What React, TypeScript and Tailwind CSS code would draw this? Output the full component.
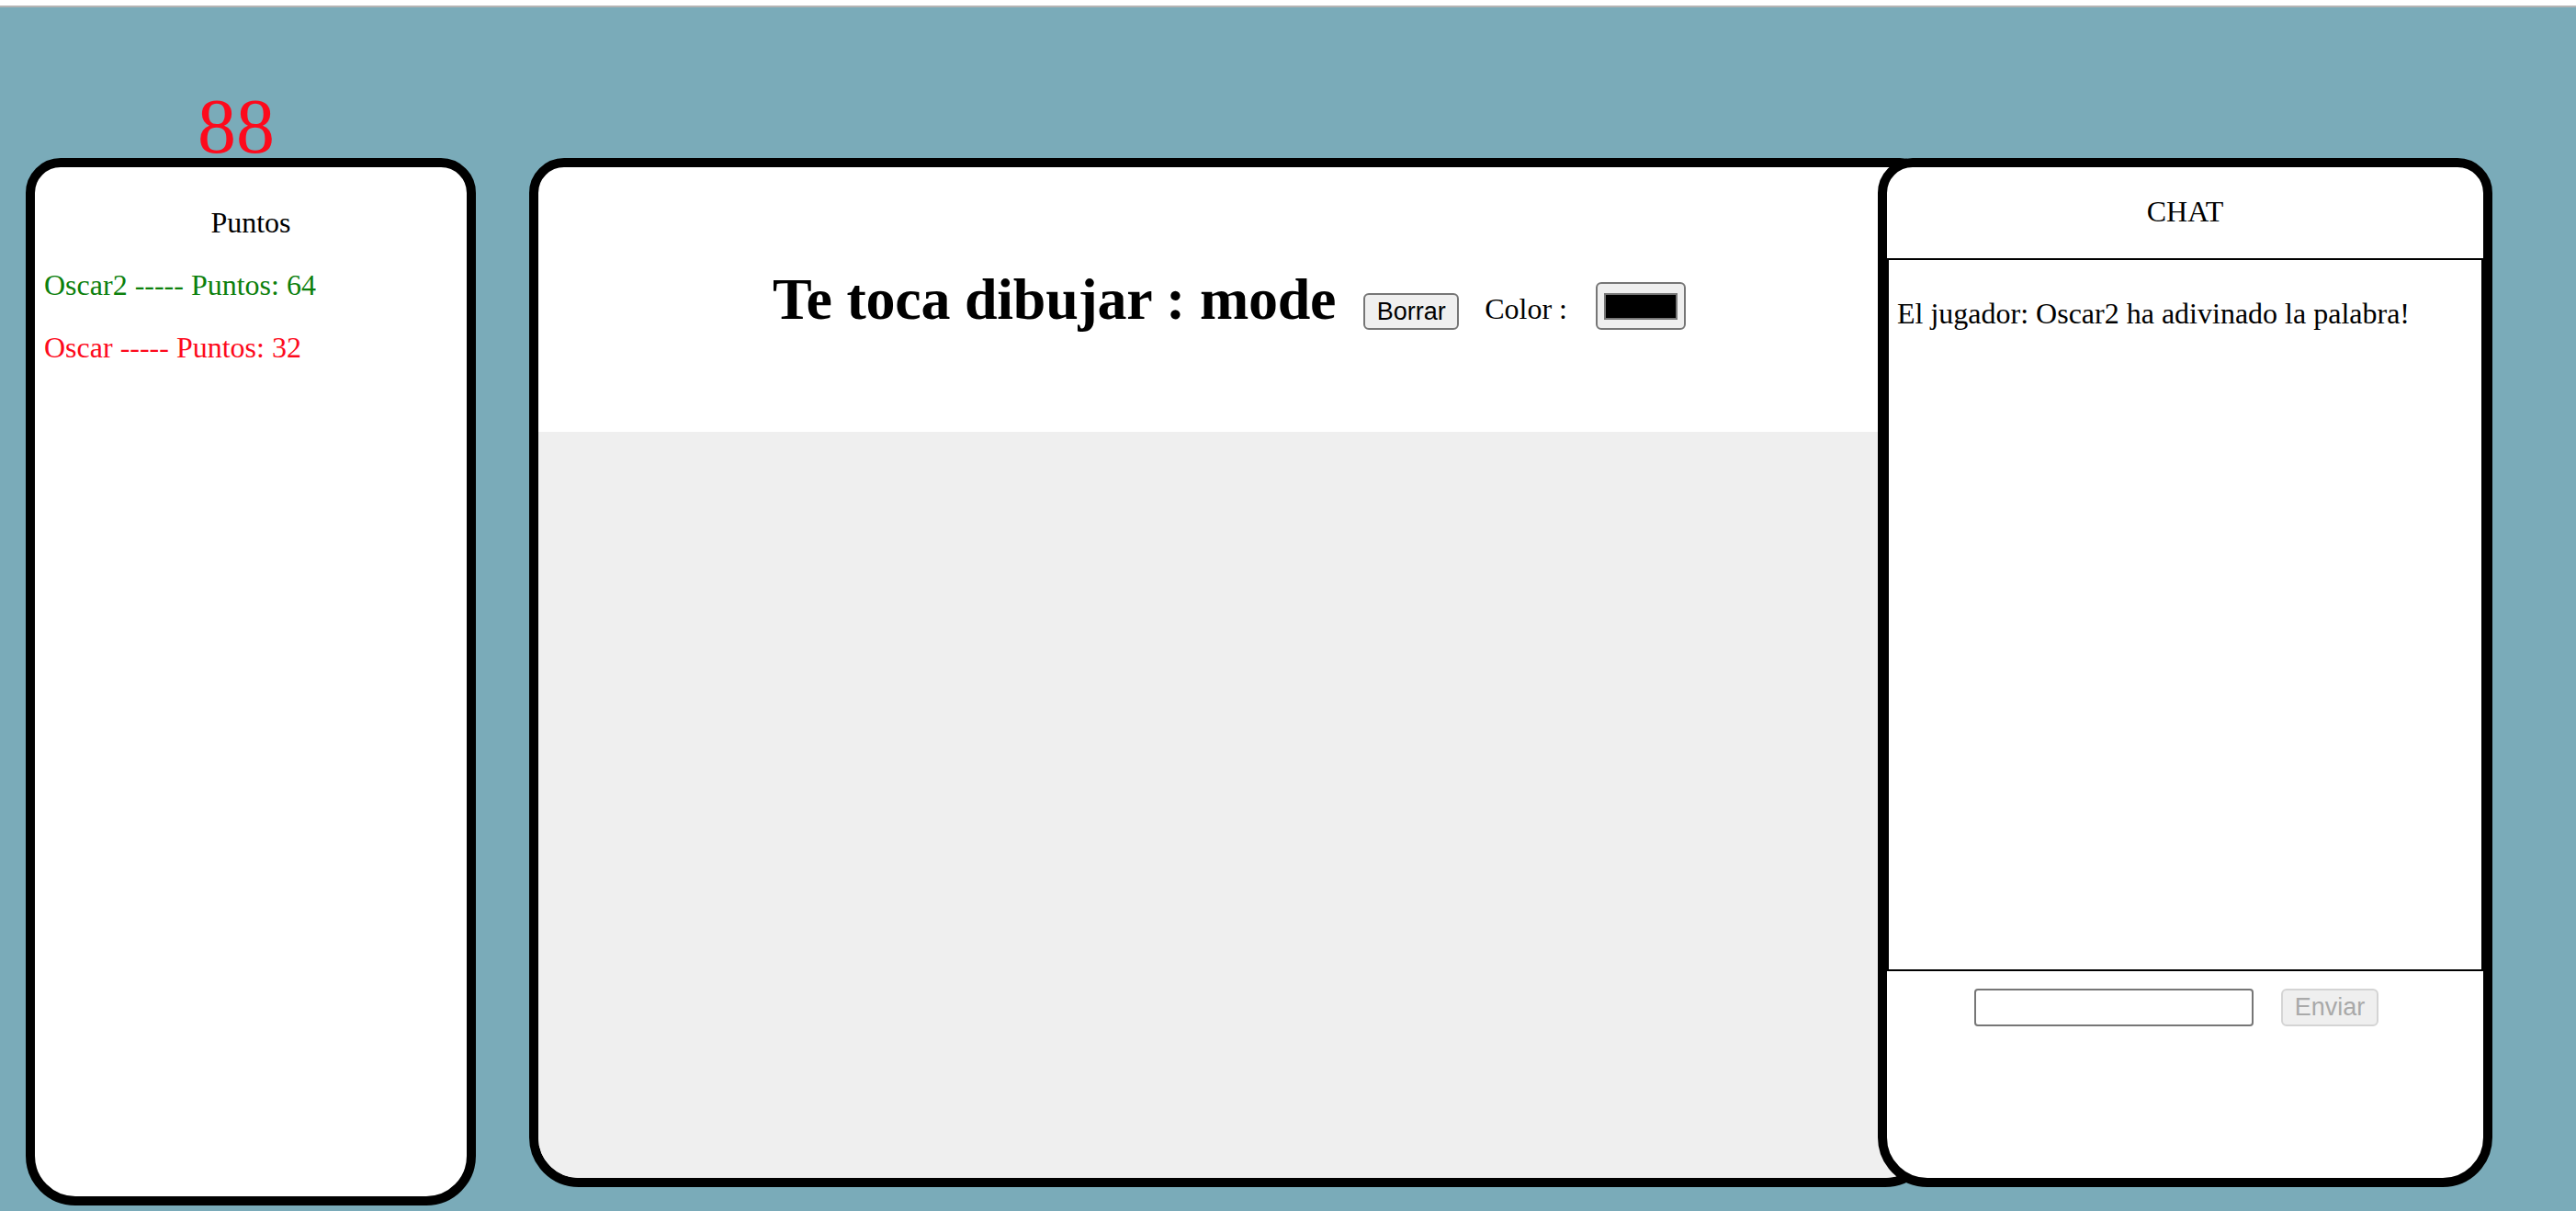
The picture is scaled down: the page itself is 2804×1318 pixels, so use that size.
import React from "react";

const players = [
  { name: "Oscar2", points: 64, color: "text-[#0c800c]" },
  { name: "Oscar", points: 32, color: "text-[#fd0a1c]" },
];

export default function App() {
  return (
    <div className="min-h-screen bg-[#7aabb9] font-['Liberation_Serif','Times_New_Roman',serif] text-black">
      <div className="h-[6px] bg-white" />
      <div className="h-[2px] bg-[#b4b4b4]" />

      <main className="flex items-start pl-[28px] pt-[95px]">
        {/* puntos */}
        <section className="w-[490px] shrink-0">
          <div className="h-[69px] pl-[187px] text-[84px] leading-[69px] text-[#fd0a1c]">88</div>
          <div className="h-[1140px] rounded-t-[38px] rounded-b-[54px] border-[10px] border-black bg-white p-[10px] text-[32px] leading-[36px]">
            <p className="my-[32px] text-center">Puntos</p>
            {players.map((p) => (
              <p key={p.name} className={`my-[32px] ${p.color}`}>
                {p.name} ----- Puntos: {p.points}
              </p>
            ))}
          </div>
        </section>

        {/* pizarra */}
        <section className="ml-[58px] mt-[69px] flex h-[1120px] w-[1530px] shrink-0 flex-col overflow-hidden rounded-t-[38px] rounded-b-[54px] border-[10px] border-black bg-white">
          <div className="flex h-[288px] shrink-0 items-start justify-center pr-[6px]">
            <h1 className="mt-[107px] text-[64px] font-bold leading-[74px] tracking-[-0.25px]">Te toca dibujar : mode</h1>
            <button className="ml-[30px] mt-[137px] h-[40px] w-[104px] rounded-[6px] border-2 border-[#767676] bg-[#efefef] font-['Liberation_Sans',Arial,sans-serif] text-[27px] leading-none">
              Borrar
            </button>
            <span className="ml-[28px] mt-[136px] text-[32px] leading-[36px]">Color :</span>
            <div className="ml-[31px] mt-[125px] flex h-[52px] w-[98px] items-center justify-center rounded-[6px] border-2 border-[#767676] bg-[#efefef]">
              <div className="h-[29px] w-[80px] border-2 border-[#777777] bg-black" />
            </div>
          </div>
          <div className="flex-1 bg-[#efefef]" />
        </section>

        {/* chat */}
        <section className="relative z-10 -ml-[62px] mt-[69px] flex h-[1120px] w-[669px] shrink-0 flex-col rounded-t-[38px] rounded-b-[54px] border-[10px] border-black bg-white">
          <div className="h-[99px] shrink-0 pt-[30px] text-center text-[32px] leading-[36px]">CHAT</div>
          <div className="h-[776px] shrink-0 border-2 border-black px-[9px] pt-[8px]">
            <p className="mt-[32px] text-[32px] leading-[36px]">El jugador: Oscar2 ha adivinado la palabra!</p>
          </div>
          <div className="flex items-start gap-[30px] pl-[95px] pt-[19px]">
            <input
              type="text"
              className="h-[41px] w-[304px] rounded-[4px] border-2 border-[#767676] bg-white px-2 text-[26px] outline-none"
            />
            <button
              disabled
              className="h-[41px] w-[106px] rounded-[6px] border-2 border-[#d4d4d4] bg-[#efefef] font-['Liberation_Sans',Arial,sans-serif] text-[27px] leading-none text-[#a9a9a9]"
            >
              Enviar
            </button>
          </div>
        </section>
      </main>
    </div>
  );
}
